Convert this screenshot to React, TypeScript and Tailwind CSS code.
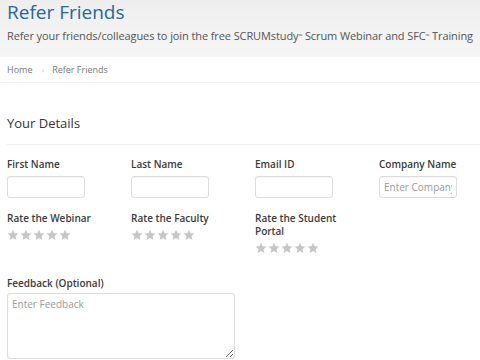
import { ReactNode } from 'react'

function Stars() {
  return (
    <div className="flex gap-[1px] mt-[4px]">
      {[0, 1, 2, 3, 4].map((i) => (
        <svg key={i} width="12" height="12" viewBox="0 0 24 24">
          <path
            d="M12 1.5l3.2 7 7.6.7-5.7 5.1 1.7 7.5L12 17.9l-6.8 3.9 1.7-7.5L1.2 9.2l7.6-.7z"
            fill="#c6c6c6"
          />
        </svg>
      ))}
    </div>
  )
}

function Field({ label, placeholder }: { label: string; placeholder?: string }) {
  return (
    <div className="w-[124px] shrink-0 pr-[14px]">
      <label className="block text-[10px] leading-[13px] font-semibold text-[#3a3a3a] mb-[2px]">{label}</label>
      <input
        placeholder={placeholder}
        className="w-[78px] h-[22px] border border-[#dcdcdc] rounded-[3px] px-[4px] text-[10px] text-[#555] placeholder:text-[#999] shadow-[inset_0_1px_1px_rgba(0,0,0,0.04)] outline-none"
      />
    </div>
  )
}

function Rating({ label }: { label: ReactNode }) {
  return (
    <div className="w-[124px] shrink-0 pr-[14px]">
      <div className="text-[10px] leading-[13px] font-semibold text-[#3a3a3a]">{label}</div>
      <Stars />
    </div>
  )
}

export default function App() {
  return (
    <div className="w-[480px] h-[360px] overflow-hidden bg-white font-['Open_Sans',sans-serif]">
      <header className="h-[57px] px-[7px] bg-gradient-to-b from-[#eeeeee] to-[#f6f6f6]">
        <h1 className="text-[19px] leading-[25px] text-[#2a6698]">Refer Friends</h1>
        <p className="mt-[3px] text-[11px] leading-[16px] tracking-[-0.1px] text-[#555] whitespace-nowrap">
          Refer your friends/colleagues to join the free SCRUMstudy<sup className="text-[5px]">™</sup> Scrum Webinar
          and SFC<sup className="text-[5px]">™</sup> Training
        </p>
      </header>

      <nav className="h-[26px] pt-[6px] px-[7px] border-b border-[#f1f1f1] flex text-[9px] leading-[14px] text-[#777]">
        <span>Home</span>
        <span className="ml-[9px] mr-[8px] text-[#d0d0d0]">›</span>
        <span>Refer Friends</span>
      </nav>

      <main className="pl-[7px]">
        <h2 className="mt-[30px] text-[13px] leading-[20px] text-[#333]">Your Details</h2>
        <div className="mt-[11px] border-t border-[#f0f0f0]" />

        <div className="flex mt-[13px]">
          <Field label="First Name" />
          <Field label="Last Name" />
          <Field label="Email ID" />
          <Field label="Company Name" placeholder="Enter Company" />
        </div>

        <div className="flex mt-[14px]">
          <Rating label="Rate the Webinar" />
          <Rating label="Rate the Faculty" />
          <Rating label="Rate the Student Portal" />
        </div>

        <div className="mt-[23px]">
          <label className="block text-[10px] leading-[13px] font-semibold text-[#3a3a3a] mb-[3px]">
            Feedback (Optional)
          </label>
          <textarea
            placeholder="Enter Feedback"
            className="block w-[228px] h-[66px] border border-[#dcdcdc] rounded-[3px] px-[4px] py-[3px] text-[10px] text-[#555] placeholder:text-[#999] outline-none"
          />
        </div>
      </main>
    </div>
  )
}
